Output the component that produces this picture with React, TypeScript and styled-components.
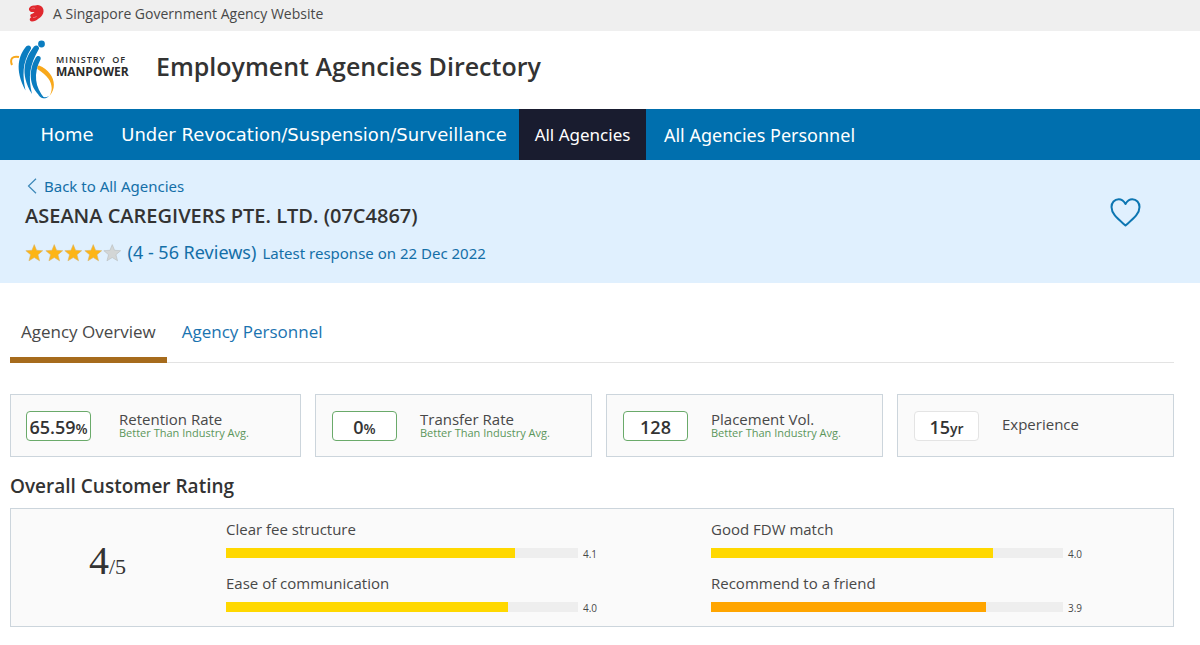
import React from "react";
import styled, { createGlobalStyle } from "styled-components";

const GlobalStyle = createGlobalStyle`
  *, *::before, *::after { box-sizing: border-box; }
  body {
    margin: 0;
    background: #fff;
    color: #333;
    font-family: "Open Sans", "Noto Sans", sans-serif;
    font-size: 15px;
    line-height: 20px;
  }
  h1, h2, p, ul { margin: 0; padding: 0; }
  a { color: #146fa8; text-decoration: none; }
`;

const GovBar = styled.div`
  display: flex;
  align-items: center;
  gap: 8px;
  height: 31px;
  padding: 0 28px 4px;
  background: #efefef;
  color: #484848;
  font-size: 14px;
`;

const SiteHeader = styled.header`
  display: flex;
  align-items: center;
  height: 78px;
  padding: 0 10px;
`;

const Brand = styled.a`
  display: flex;
  align-items: center;
  width: 146px;
  color: #2b2b2b;
`;

const BrandName = styled.span`
  display: flex;
  flex-direction: column;
  padding: 0 0 8px 1px;
  line-height: 12px;
`;

const BrandSmall = styled.span`
  font-size: 9px;
  font-weight: 600;
  letter-spacing: 1px;
  word-spacing: 3px;
  white-space: nowrap;
`;

const BrandLarge = styled.span`
  font-size: 12px;
  font-weight: 700;
`;

const SiteTitle = styled.h1`
  padding-bottom: 8px;
  font-size: 25px;
  font-weight: 600;
  line-height: 36px;
`;

const Nav = styled.nav`
  display: flex;
  height: 51px;
  padding-left: 25px;
  background: #006fae;
`;

const NavLink = styled.a<{ $width: number; $active?: boolean; $font?: string }>`
  display: flex;
  flex: 0 0 ${(p) => p.$width}px;
  align-items: center;
  justify-content: center;
  background: ${(p) => (p.$active ? "#191c2f" : "transparent")};
  color: #fff;
  font-family: ${(p) => p.$font || `"Noto Sans"`}, sans-serif;
  font-size: ${(p) => (p.$active ? "17px" : "18px")};
  white-space: nowrap;
`;

const Banner = styled.section`
  display: flex;
  justify-content: space-between;
  align-items: center;
  height: 123px;
  padding: 0 59px 0 25px;
  background: #e0f0fe;
`;

const BannerText = styled.div`
  display: flex;
  flex-direction: column;
  height: 91px;
`;

const BackLink = styled.a`
  display: flex;
  align-items: center;
  gap: 7px;
  height: 22px;
  padding-left: 2px;
  font-family: "Noto Sans", sans-serif;
`;

const AgencyName = styled.h2`
  font-size: 20px;
  font-weight: 600;
  line-height: 40px;
`;

const Reviews = styled.a`
  display: flex;
  align-items: baseline;
  gap: 6px;
  line-height: 32px;
`;

const Stars = styled.span`
  display: flex;
  gap: 1px;
  align-self: center;
`;

const ReviewCount = styled.span`
  font-family: "Noto Sans", sans-serif;
  font-size: 18px;
`;

const LatestResponse = styled.span`
  font-family: "Noto Sans", sans-serif;
  font-size: 15px;
`;

const HeartButton = styled.button`
  display: flex;
  padding: 0;
  border: 0;
  margin-bottom: 19px;
  background: none;
  cursor: pointer;
`;

const Content = styled.main`
  padding: 22px 26px 19px 10px;
`;

const Tabs = styled.nav`
  display: flex;
  gap: 4px;
  height: 58px;
  border-bottom: 1px solid #e3e3e3;
`;

const Tab = styled.a<{ $active?: boolean }>`
  display: flex;
  align-items: center;
  height: 58px;
  padding: 2px 11px 0;
  border-bottom: 6px solid ${(p) => (p.$active ? "#a66b1c" : "transparent")};
  color: ${(p) => (p.$active ? "#484848" : "#1a73b0")};
  font-size: 17px;
`;

const Cards = styled.ul`
  display: grid;
  grid-template-columns: 291fr 277fr 277fr 277fr;
  gap: 14px;
  margin-top: 31px;
  list-style: none;
`;

const Card = styled.li<{ $wide?: boolean }>`
  display: flex;
  align-items: center;
  gap: ${(p) => (p.$wide ? "28px" : "23px")};
  height: 63px;
  padding: 0 ${(p) => (p.$wide ? "15px" : "16px")};
  border: 1px solid #ccd5dc;
  background: #fafafa;
`;

const Figure = styled.span<{ $good?: boolean }>`
  display: flex;
  flex: none;
  align-items: baseline;
  justify-content: center;
  width: 65px;
  height: 30px;
  border: 1px solid ${(p) => (p.$good ? "#6aaa6a" : "#e4e4e4")};
  border-radius: 4px;
  background: #fff;
  font-size: 18px;
  font-weight: 600;
  line-height: 30px;
`;

const Unit = styled.small`
  font-size: 14px;
`;

const CardText = styled.span`
  display: flex;
  flex-direction: column;
  padding-bottom: 2px;
`;

const CardLabel = styled.span`
  color: #484848;
  line-height: 15px;
`;

const CardNote = styled.span`
  color: #5b965b;
  font-size: 11px;
  line-height: 11px;
`;

const SectionTitle = styled.h2`
  margin-top: 17px;
  font-size: 19px;
  font-weight: 600;
  line-height: 24px;
`;

const RatingPanel = styled.section`
  display: grid;
  grid-template-columns: 215px 1fr;
  align-items: center;
  height: 119px;
  margin-top: 10px;
  padding-right: 91px;
  border: 1px solid #ccd5dc;
  background: #fafafa;
`;

const Score = styled.p`
  padding: 0 22px 8px 0;
  font-family: "Liberation Serif", serif;
  font-size: 40px;
  line-height: 44px;
  text-align: center;
`;

const OutOf = styled.small`
  font-size: 22px;
`;

const RatingGrid = styled.div`
  display: grid;
  grid-template-columns: 1fr 1fr;
  column-gap: 114px;
  row-gap: 10px;
`;

const RatingLabel = styled.p`
  color: #484848;
  line-height: 20px;
`;

const Meter = styled.div`
  display: flex;
  align-items: center;
  gap: 5px;
  height: 24px;
  padding-top: 4px;
`;

const Track = styled.div`
  flex: 1;
  height: 10px;
  background: #eeeeee;
`;

const Bar = styled.div<{ $color: string }>`
  height: 10px;
  background: ${(p) => p.$color};
`;

const Value = styled.span`
  width: 14px;
  padding-top: 2px;
  color: #484848;
  font-size: 10px;
`;

const Lion = () => (
  <svg width="17" height="19" viewBox="0 0 17 19" aria-hidden="true">
    <path
      fill="#e0282e"
      d="M1 4.500C2 2 4.500 1 7 1.500 9.500.2 13 1 14.500 3.500 16 5.500 16 9 14 11.500c-1 1.500-2.500 2.500-4 3.500-1.500 1.200-3.500 2.500-6 2.500-1.500 0-2.500-1-2.200-2.500.2-1 .7-1.500 1.500-1.800-.8-.4-1.200-1-1-1.900.2-.9 1-1.300 1.900-1.600 1-.4 1.800-.9 2.300-1.700-1.500.2-3.500.2-4.500-.8C1 6.500.8 5.500 1 4.500z"
    />
    <path fill="none" stroke="#f2a5a5" strokeWidth=".6" d="M3.500 4.500c1.200-.6 2.500-.6 3.500 0M5 13.500c1.500.2 3-.4 3.800-1.500" />
  </svg>
);

const Emblem = () => (
  <svg width="45" height="60" viewBox="0 0 45 60" aria-hidden="true">
    <g fill="#0a7dc0">
      <circle cx="31.500" cy="4" r="3.400" />
      <path d="M21 8.800c.6-2.800-2.300-4.600-4.700-2.500C9 15 4 29 15.500 50.500 12.500 36 12 23 21 8.800z" />
      <path d="M29 8.800c.5-2.800-2.900-4.600-5-2.300C15 18 9 33 22 54 18 37 19.500 25 29 8.800z" />
      <path d="M30.700 19c.6-2.800-3-4.300-4.700-1.800C18 30 18 50 34.500 58.500 25 47 23 34 30.700 19z" />
      <path d="M27 52c3 5 7.500 6.500 12 4-3.500 4-9.500 3-12-4z" />
    </g>
    <path fill="none" stroke="#f8a81b" strokeWidth="2" d="M2 25C-.5 19 2.500 15.500 9 17" />
    <path fill="#f8a81b" d="M29 25.500c14 5.500 19.500 20.500 10.500 30.500 5-9 1.500-18.500-11.500-26.500-1.500-1-.5-4 1-4z" />
  </svg>
);

const Star = ({ filled }: { filled: boolean }) => (
  <svg width="18.500" height="18" viewBox="0 0 18 18" aria-hidden="true">
    <path
      fill={filled ? "#fdb515" : "#d3d6d6"}
      stroke={filled ? "#d9b66b" : "#b9bdbd"}
      strokeWidth=".6"
      d="m9 .6 2.300 5.700 6.100.4-4.700 4 1.600 6.100L9 13.500l-5.300 3.300 1.600-6.100-4.700-4 6.100-.4z"
    />
  </svg>
);

const Heart = () => (
  <svg width="31" height="29" viewBox="0 0 31 29" aria-hidden="true">
    <path
      fill="none"
      stroke="#0d76b2"
      strokeWidth="2"
      strokeLinejoin="round"
      d="M15.500 6C13.500 2.500 11.500 1.300 8.700 1.300 4.500 1.300 1.500 4.700 1.500 9c0 7 6 11.500 14 18.500C23.500 20.500 29.500 16 29.500 9c0-4.300-3-7.700-7.200-7.700-2.800 0-4.800 1.200-6.800 4.700z"
    />
  </svg>
);

const Chevron = () => (
  <svg width="10" height="16" viewBox="0 0 10 16" aria-hidden="true">
    <path fill="none" stroke="#3d88b8" strokeWidth="1.200" d="M9 .7 1.500 8 9 15.300" />
  </svg>
);

const stats = [
  { value: "65.59", unit: "%", label: "Retention Rate", good: true },
  { value: "0", unit: "%", label: "Transfer Rate", good: true },
  { value: "128", unit: "", label: "Placement Vol.", good: true },
  { value: "15", unit: "yr", label: "Experience", good: false },
];

const ratings = [
  { label: "Clear fee structure", value: 4.1, color: "#ffd800" },
  { label: "Good FDW match", value: 4.0, color: "#ffd800" },
  { label: "Ease of communication", value: 4.0, color: "#ffd800" },
  { label: "Recommend to a friend", value: 3.9, color: "#ffa500" },
];

export default function App() {
  return (
    <>
      <GlobalStyle />
      <GovBar>
        <Lion />
        <span>A Singapore Government Agency Website</span>
      </GovBar>
      <SiteHeader>
        <Brand href="#" aria-label="Ministry of Manpower">
          <Emblem />
          <BrandName>
            <BrandSmall>MINISTRY OF</BrandSmall>
            <BrandLarge>MANPOWER</BrandLarge>
          </BrandName>
        </Brand>
        <SiteTitle>Employment Agencies Directory</SiteTitle>
      </SiteHeader>
      <Nav aria-label="Main">
        <NavLink href="#" $width={84} $font={`"DejaVu Sans"`}>Home</NavLink>
        <NavLink href="#" $width={410} $font={`"DejaVu Sans"`}>
          Under Revocation/Suspension/Surveillance
        </NavLink>
        <NavLink href="#" $width={127} $active aria-current="page">All Agencies</NavLink>
        <NavLink href="#" $width={227}>All Agencies Personnel</NavLink>
      </Nav>
      <Banner>
        <BannerText>
          <BackLink href="#">
            <Chevron />
            Back to All Agencies
          </BackLink>
          <AgencyName>ASEANA CAREGIVERS PTE. LTD. (07C4867)</AgencyName>
          <Reviews href="#">
            <Stars>
              {[1, 2, 3, 4, 5].map((n) => (
                <Star key={n} filled={n <= 4} />
              ))}
            </Stars>
            <ReviewCount>(4 - 56 Reviews)</ReviewCount>
            <LatestResponse>Latest response on 22 Dec 2022</LatestResponse>
          </Reviews>
        </BannerText>
        <HeartButton type="button" aria-label="Add to favourites">
          <Heart />
        </HeartButton>
      </Banner>
      <Content>
        <Tabs aria-label="Agency">
          <Tab href="#" $active aria-current="page">Agency Overview</Tab>
          <Tab href="#">Agency Personnel</Tab>
        </Tabs>
        <Cards>
          {stats.map((s) => (
            <Card key={s.label} $wide={s.value.length > 3}>
              <Figure $good={s.good}>
                {s.value}
                {s.unit && <Unit>{s.unit}</Unit>}
              </Figure>
              <CardText>
                <CardLabel>{s.label}</CardLabel>
                {s.good && <CardNote>Better Than Industry Avg.</CardNote>}
              </CardText>
            </Card>
          ))}
        </Cards>
        <SectionTitle>Overall Customer Rating</SectionTitle>
        <RatingPanel>
          <Score>
            4<OutOf>/5</OutOf>
          </Score>
          <RatingGrid>
            {ratings.map((r) => (
              <div key={r.label}>
                <RatingLabel>{r.label}</RatingLabel>
                <Meter>
                  <Track>
                    <Bar $color={r.color} style={{ width: `${r.value * 20}%` }} />
                  </Track>
                  <Value>{r.value.toFixed(1)}</Value>
                </Meter>
              </div>
            ))}
          </RatingGrid>
        </RatingPanel>
      </Content>
    </>
  );
}
